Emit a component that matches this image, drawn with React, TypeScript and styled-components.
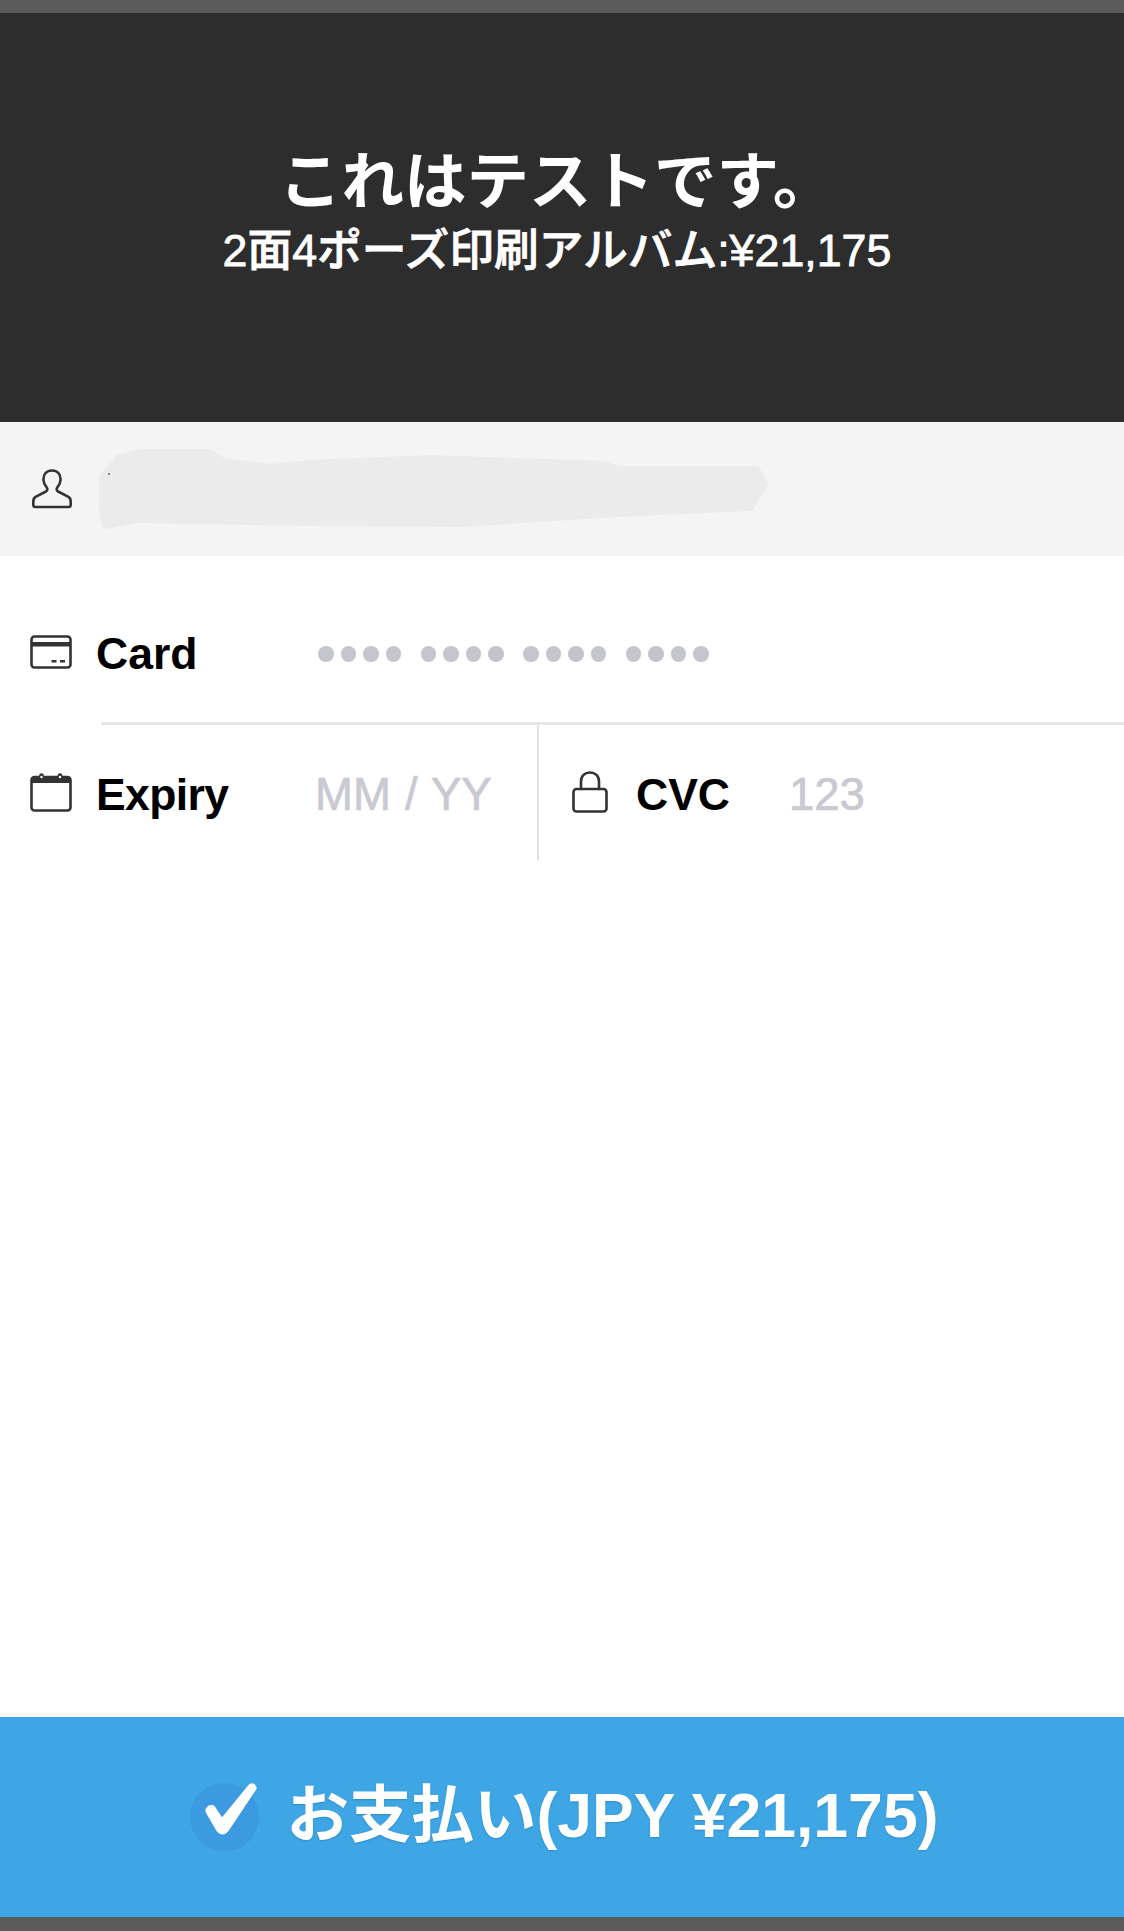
import styled, {createGlobalStyle} from "styled-components";

const GlobalStyle = createGlobalStyle`
  html, body {
    margin: 0;
    padding: 0;
    background: #fff;
  }

  body {
    font-family: "Liberation Sans", "Noto Sans CJK JP", sans-serif;
  }
`;

const Page = styled.div`
  display: flex;
  flex-direction: column;
  height: 1931px;
  overflow: hidden;
`;

const Bar = styled.div`
  height: ${p => p.$height}px;
  background: #5a5a5b;
  flex: none;
`;

const Header = styled.header`
  flex: none;
  height: 409px;
  box-sizing: border-box;
  padding: 0 10px 14px 0;
  background: #2d2d2d;
  color: #fff;
  display: flex;
  flex-direction: column;
  align-items: center;
  justify-content: center;
`;

const Title = styled.h1`
  margin: 0 0 5px;
  font-size: 62.5px;
  line-height: 73px;
  font-weight: 700;
`;

const Subtitle = styled.div`
  font-size: 44.75px;
  line-height: 52px;
  font-weight: 500;
  -webkit-text-stroke: 0.8px #fff;
`;

const EmailRow = styled.div`
  flex: none;
  height: 134px;
  box-sizing: border-box;
  padding-left: 32px;
  background: #f4f4f4;
  display: flex;
  align-items: center;
  gap: 26px;
`;

const Main = styled.main`
  flex: 1;
`;

const CardRow = styled.div`
  height: 166px;
  box-sizing: border-box;
  padding: 30px 0 0 30px;
  display: flex;
  align-items: center;
`;

const Divider = styled.div`
  height: 3px;
  margin-left: 101px;
  background: #e6e6e8;
`;

const SplitRow = styled.div`
  height: 135px;
  display: flex;
`;

const ExpiryField = styled.div`
  width: 539px;
  box-sizing: border-box;
  padding: 4px 0 0 30px;
  border-right: 2px solid #e2e2e4;
  display: flex;
  align-items: center;
`;

const CvcField = styled.div`
  flex: 1;
  padding: 4px 0 0 33px;
  display: flex;
  align-items: center;
`;

const IconCell = styled.div`
  width: ${p => p.$width}px;
  flex: none;
  display: flex;
  align-items: center;
  margin-bottom: 5px;
`;

const Label = styled.span`
  width: ${p => p.$width}px;
  flex: none;
  font-size: 44.5px;
  font-weight: 700;
  letter-spacing: ${p => p.$tracking || 0}px;
  color: #000;
`;

const Placeholder = styled.span`
  font-size: 45.5px;
  word-spacing: 1.5px;
  color: #c9c9d1;
  -webkit-text-stroke: 0.7px #c9c9d1;
`;

const DotField = styled.div`
  display: flex;
  gap: 19.5px;
`;

const DotGroup = styled.div`
  display: flex;
  gap: 7px;
`;

const Dot = styled.i`
  display: block;
  width: 15.5px;
  height: 15.5px;
  border-radius: 50%;
  background: #c5c5cd;
`;

const PayButton = styled.button`
  flex: none;
  height: 200px;
  padding: 0 0 0 4px;
  border: 0;
  background: #3fa6e5;
  color: #fff;
  font-family: inherit;
  font-size: 62.5px;
  font-weight: 700;
  display: flex;
  align-items: center;
  justify-content: center;
  gap: 27px;
  text-shadow: 0 1px 2px rgba(20, 90, 150, 0.35);
`;

const PayText = styled.span`
  margin-bottom: 16px;
`;

const iconStroke = {fill: "none", stroke: "#333", strokeWidth: 2.6, strokeLinejoin: "round", strokeLinecap: "round"} as const;

const UserIcon = () => (
  <svg width="40" height="40" viewBox="0 0 40 40">
    <path {...iconStroke} d="M20 1.5c-5.6 0-8.6 4-8.6 9 0 3.8 2 6.500 3.400 8.200 1 1.300.7 3-.9 3.800L4 27.600c-2 1-2.700 2.600-2.700 4.900v3.300c0 1.300.9 2.200 2.200 2.200h33c1.300 0 2.200-.9 2.200-2.200v-3.300c0-2.300-.7-3.900-2.700-4.900l-9.900-5.100c-1.600-.8-1.900-2.500-.9-3.800 1.400-1.700 3.400-4.400 3.400-8.200 0-5-3-9-8.600-9z"/>
  </svg>
);

const CardIcon = () => (
  <svg width="42" height="34" viewBox="0 0 42 34">
    <rect {...iconStroke} x="1.500" y="1.500" width="39" height="31" rx="3"/>
    <path fill="#333" d="M1.500 7h39v4.500h-39z"/>
    <path fill="#333" d="M21.500 25h5v2.500h-5zM30 25h5v2.500h-5z"/>
  </svg>
);

const CalendarIcon = () => (
  <svg width="42" height="40" viewBox="0 0 42 40">
    <rect {...iconStroke} x="1.500" y="5" width="39" height="33.500" rx="3"/>
    <path fill="#333" d="M1.500 5h39v6h-39z"/>
    <circle cx="11.500" cy="3.500" r="2.300" fill="#333"/>
    <circle cx="30" cy="3.500" r="2.300" fill="#333"/>
    <circle cx="11.500" cy="5" r="1.200" fill="#fff"/>
    <circle cx="30" cy="5" r="1.200" fill="#fff"/>
  </svg>
);

const LockIcon = () => (
  <svg width="36" height="42" viewBox="0 0 36 42">
    <path {...iconStroke} d="M9 18v-7.500C9 5 12.800 1.500 18 1.500S27 5 27 10.500V18"/>
    <rect {...iconStroke} x="1.500" y="18" width="33" height="22.500" rx="3"/>
  </svg>
);

const Redaction = () => (
  <svg width="672" height="82" viewBox="0 0 672 82">
    <path fill="#ebebeb" stroke="#ebebeb" strokeWidth="8" strokeLinejoin="round" d="M5 30L22 10L45 5L112 5L125 14L174 20L211 16L334 11L506 17L519 22L658 22L666 36L652 59L519 65L365 75L211 74L38 71L8 77L5 61z"/>
    <circle cx="11" cy="26" r="1" fill="#666"/>
  </svg>
);

const CheckBadge = () => (
  <svg width="70" height="70" viewBox="0 0 70 70">
    <circle cx="34.500" cy="35" r="34.500" fill="#3b9ae0"/>
    <path d="M16 30C15 26 19 22 24 24L32 36L59 3C62 0 67 3 66 7L38 49C35 53 30 53 27 49z" fill="#fff" stroke="#fff" strokeWidth="1" strokeLinejoin="round"/>
  </svg>
);

const App = () => {
  const groups = [0, 1, 2, 3]

  return (
    <Page>
      <GlobalStyle/>
      <Bar $height={13}/>
      <Header>
        <Title>これはテストです。</Title>
        <Subtitle>2面4ポーズ印刷アルバム:¥21,175</Subtitle>
      </Header>
      <EmailRow>
        <UserIcon/>
        <Redaction/>
      </EmailRow>
      <Main>
        <CardRow>
          <IconCell $width={66}><CardIcon/></IconCell>
          <Label $width={222}>Card</Label>
          <DotField>
            {groups.map(group => (
              <DotGroup key={group}>
                {groups.map(dot => <Dot key={dot}/>)}
              </DotGroup>
            ))}
          </DotField>
        </CardRow>
        <Divider/>
        <SplitRow>
          <ExpiryField>
            <IconCell $width={66}><CalendarIcon/></IconCell>
            <Label $width={219} $tracking={-0.6}>Expiry</Label>
            <Placeholder>MM / YY</Placeholder>
          </ExpiryField>
          <CvcField>
            <IconCell $width={64}><LockIcon/></IconCell>
            <Label $width={153}>CVC</Label>
            <Placeholder>123</Placeholder>
          </CvcField>
        </SplitRow>
      </Main>
      <PayButton>
        <CheckBadge/>
        <PayText>お支払い(JPY ¥21,175)</PayText>
      </PayButton>
      <Bar $height={14}/>
    </Page>
  );
};

export default App;
